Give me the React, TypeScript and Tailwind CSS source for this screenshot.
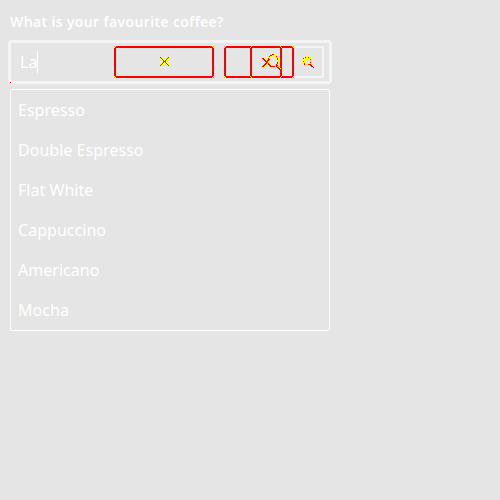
const coffees = ['Espresso', 'Double Espresso', 'Flat White', 'Cappuccino', 'Americano', 'Mocha'];

const crossPixels = [
  'ry.....yr',
  'yry...yry',
  '.yry.yry.',
  '..yryry..',
  '...rrr...',
  '..yryry..',
  '.yry.yry.',
  'yry...yry',
  'ry.....yr',
];

const searchPixels = [
  '...yyyy.....',
  '..yryyry....',
  '.ryyyyyyy...',
  'yyy....yry..',
  'yyy....yyy..',
  'yry....yyy..',
  'yyy....yry..',
  '.yryyyyyy...',
  '..ryyyrrry..',
  '...yyyyyrry.',
  '.........rry',
  '..........yr',
];

const crossSearchPixels = [
  '.........yrry......',
  '.......yrryyyyy....',
  '......yryy..yyry...',
  '......yy......yyy..',
  'rry...ry......yry..',
  'yrry.yrr.......ry..',
  '.yrryrry.......yy..',
  '..yrrry........yy..',
  '...yrry........ry..',
  '..yrryry......yry..',
  '.yrry.rry.....ry...',
  'yrry..yrr.y.yyrry..',
  'rry....yrrrrryryy..',
  '........yyyy..yrry.',
  '...............yrry',
  '................yrr',
];

function Pixels({ rows }: { rows: string[] }) {
  return (
    <svg
      className="block"
      width={rows[0].length}
      height={rows.length}
      shapeRendering="crispEdges"
    >
      {rows.flatMap((row, y) =>
        [...row].map((c, x) =>
          c === '.' ? null : (
            <rect key={`${x}-${y}`} x={x} y={y} width="1" height="1" fill={c === 'r' ? '#ff0000' : '#ffff00'} />
          ),
        ),
      )}
    </svg>
  );
}

function Corners() {
  return (
    <svg className="absolute -inset-0.5 h-8 w-[calc(100%+4px)]" fill="#ffff00" shapeRendering="crispEdges">
      <path d="M0 1h1v1h-1zM1 0h1v1h-1zM0 30h1v1h-1zM1 31h1v1h-1z" />
      <svg x="100%" overflow="visible">
        <path d="M-1 1h1v1h-1zM-2 0h1v1h-1zM-1 30h1v1h-1zM-2 31h1v1h-1z" />
      </svg>
    </svg>
  );
}

export default function App() {
  return (
    <main className="h-[500px] w-[500px] overflow-hidden bg-[#e5e5e5] pl-2 pt-3 font-['Noto_Sans',sans-serif] text-white">
      <label className="block h-7 pl-0.5 font-['Open_Sans',sans-serif] text-sm font-semibold leading-5 tracking-[0.4px]">What is your favourite coffee?</label>
      <div className="relative flex h-11 w-[324px] items-center rounded border-[3px] border-[#f4f4f4]">
        <i className="absolute -bottom-0.5 -left-px size-px bg-[#ff0000]" />
        <div className="flex w-[103px] items-center pl-[9px]">
          <span className="text-base leading-6">La</span>
          <span className="h-[22px] w-px bg-white" />
        </div>
        <div className="relative flex h-8 w-[100px] items-center justify-center rounded-[2px] border-2 border-[#ff0000] pb-px pr-px">
          <span className="pl-px">
            <Pixels rows={crossPixels} />
          </span>
          <Corners />
        </div>
        <div className="relative ml-2.5 flex h-8 w-[70px] items-center rounded-[2px] border-2 border-[#ff0000] pl-6">
          <Corners />
          <div className="relative h-8 w-8 shrink-0 rounded-[2px] border-2 border-[#ff0000] pl-2.5 pt-1.5">
            <Pixels rows={crossSearchPixels} />
            <Corners />
          </div>
        </div>
        <div className="h-8 w-[30px] rounded-r-[2px] border-2 border-l-0 border-[#f4f4f4] pl-2 pt-2">
          <Pixels rows={searchPixels} />
        </div>
      </div>
      <ul className="ml-0.5 mt-[5px] h-[242px] w-80 rounded-[2px] border border-white">
        {coffees.map((name) => (
          <li key={name} className="h-10 pl-[7px] text-base leading-10 tracking-[0.03px]">{name}</li>
        ))}
      </ul>
    </main>
  );
}
